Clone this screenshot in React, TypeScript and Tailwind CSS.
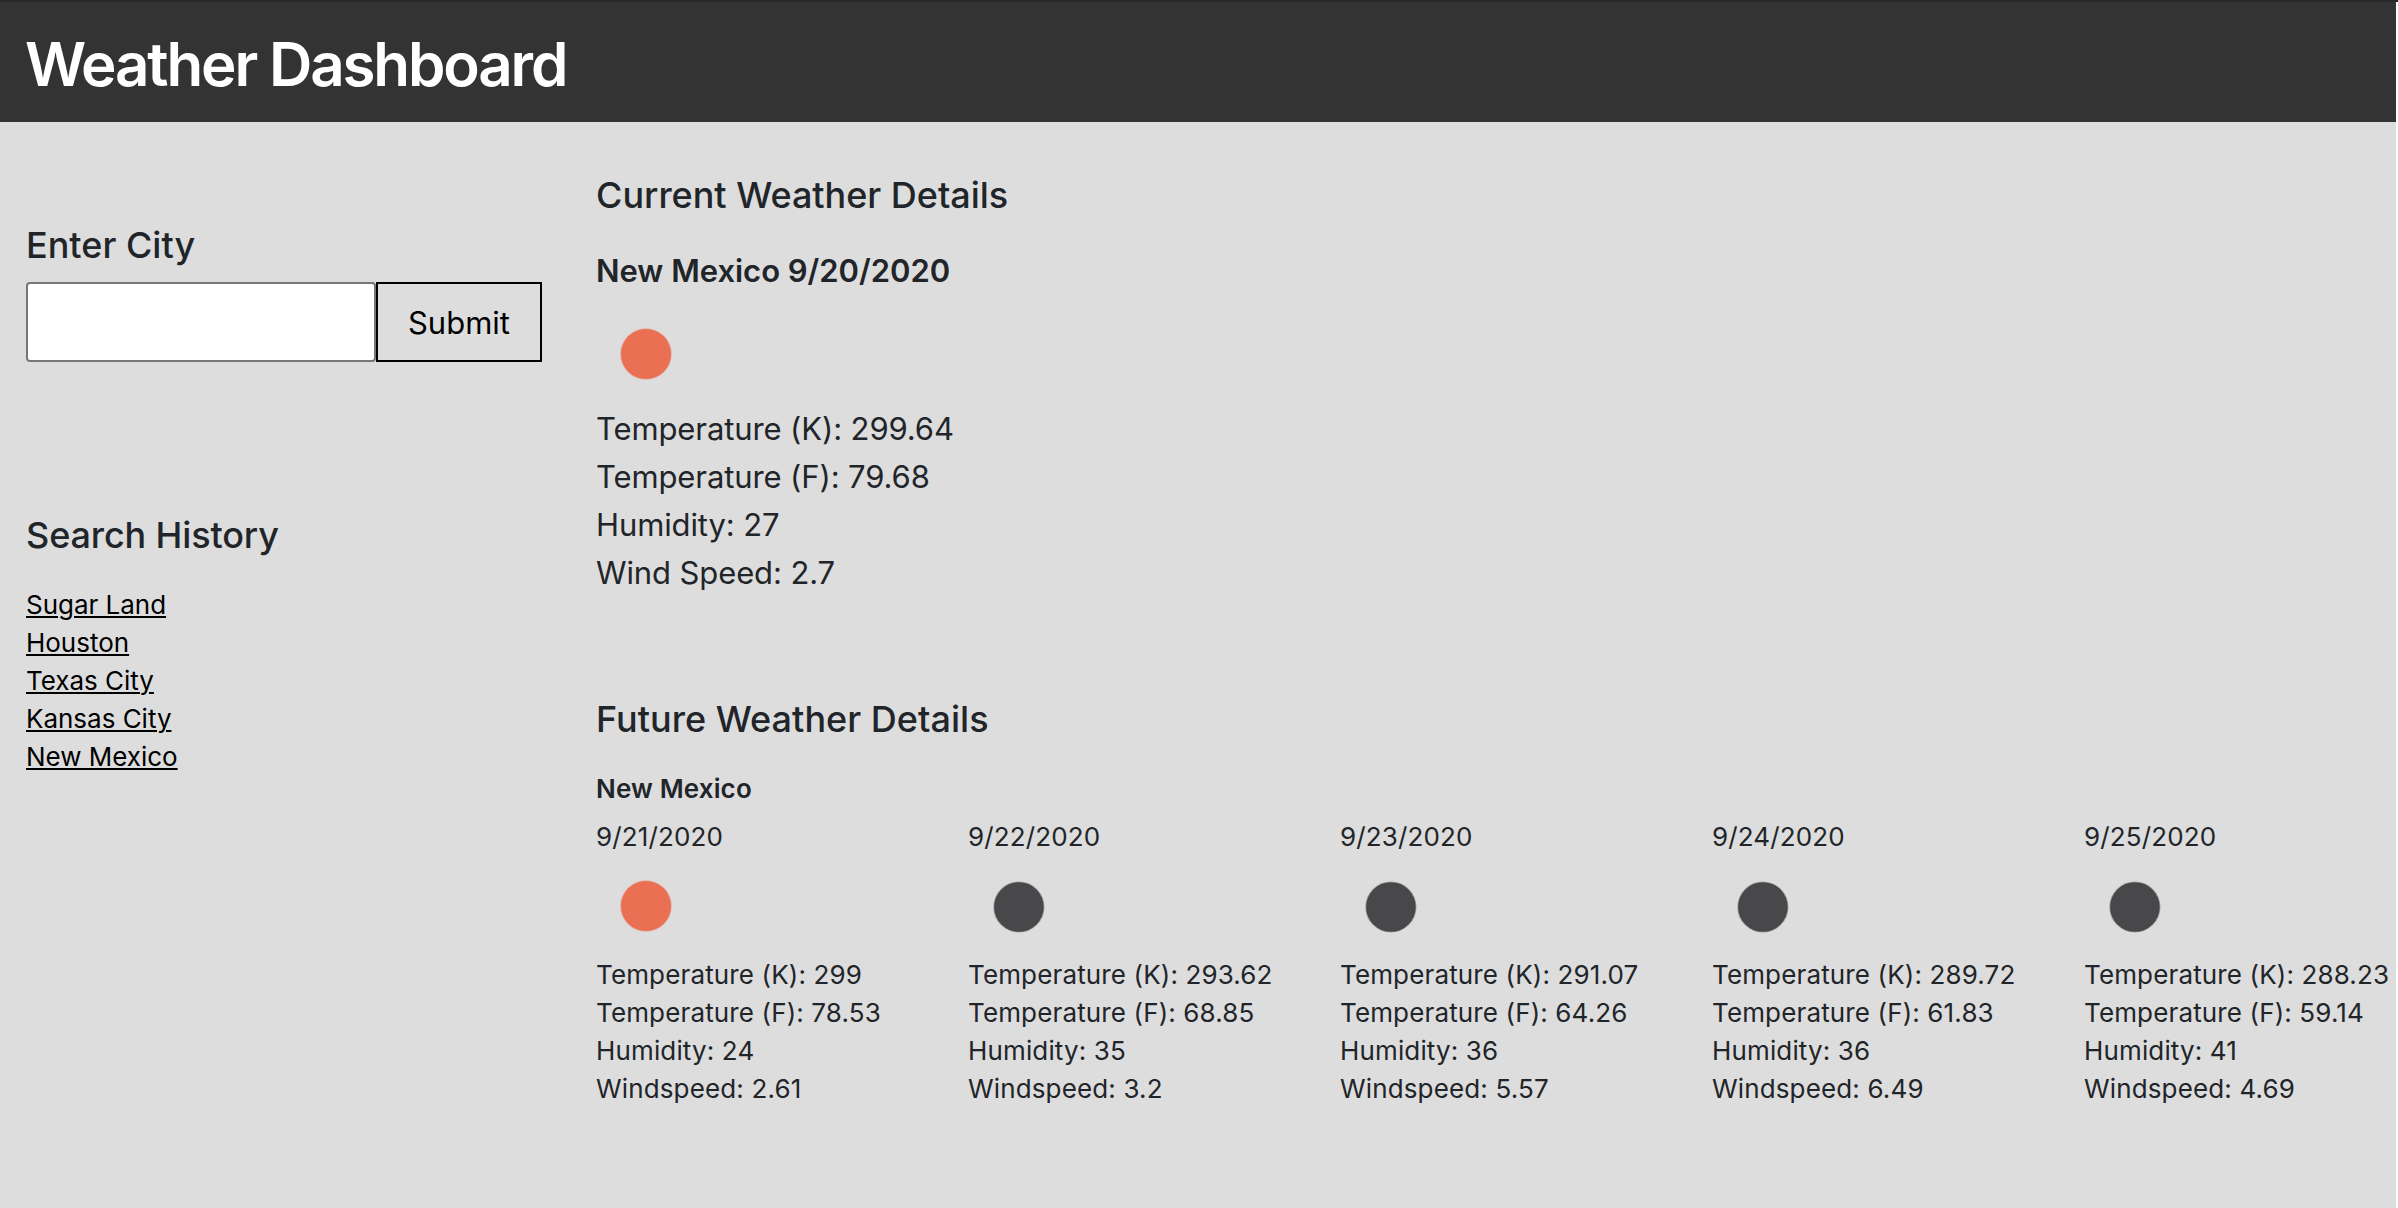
type Forecast = {
  date: string;
  tone: "clear" | "cloudy";
  kelvin: string;
  fahrenheit: string;
  humidity: string;
  wind: string;
};

const history = ["Sugar Land", "Houston", "Texas City", "Kansas City", "New Mexico"];

const forecasts: Forecast[] = [
  { date: "9/21/2020", tone: "clear", kelvin: "299", fahrenheit: "78.53", humidity: "24", wind: "2.61" },
  { date: "9/22/2020", tone: "cloudy", kelvin: "293.62", fahrenheit: "68.85", humidity: "35", wind: "3.2" },
  { date: "9/23/2020", tone: "cloudy", kelvin: "291.07", fahrenheit: "64.26", humidity: "36", wind: "5.57" },
  { date: "9/24/2020", tone: "cloudy", kelvin: "289.72", fahrenheit: "61.83", humidity: "36", wind: "6.49" },
  { date: "9/25/2020", tone: "cloudy", kelvin: "288.23", fahrenheit: "59.14", humidity: "41", wind: "4.69" },
];

function WeatherIcon({ tone }: { tone: "clear" | "cloudy" }) {
  return (
    <svg viewBox="0 0 100 100" className="block size-[100px]" aria-hidden="true">
      {tone === "clear" ? (
        <circle cx="50" cy="50" r="25" fill="#eb6f52" stroke="#eb6f52" strokeOpacity="0.4" strokeWidth="1.6" />
      ) : (
        <circle cx="50.9" cy="51" r="24.8" fill="#48484a" stroke="#48484a" strokeOpacity="0.4" strokeWidth="1.6" />
      )}
    </svg>
  );
}

function ForecastColumn({ day }: { day: Forecast }) {
  return (
    <div className="w-[372px] shrink-0 whitespace-nowrap">
      <p>{day.date}</p>
      <WeatherIcon tone={day.tone} />
      <p>Temperature (K): {day.kelvin}</p>
      <p>Temperature (F): {day.fahrenheit}</p>
      <p>Humidity: {day.humidity}</p>
      <p>Windspeed: {day.wind}</p>
    </div>
  );
}

export default function App() {
  return (
    <div className="h-[1208px] w-full overflow-hidden bg-white font-['Inter',sans-serif] text-[#212529]">
      <div className="h-[2px] bg-[#282828]" />
      <div className="flex h-[1206px] w-[2396px] flex-col bg-[#dddddd]">
        <header className="h-[120px] shrink-0 bg-[#333333] pt-[26px] pl-[25px]">
          <h1 className="text-[60px] leading-[72px] font-[570] tracking-[-2.14px] text-white">Weather Dashboard</h1>
        </header>

        <div className="flex">
          <aside className="w-[596px] shrink-0 pt-[101px] pl-[26px]">
            <h2 className="text-[36px] leading-[44px] font-medium">Enter City</h2>
            <form className="mt-[15px] flex" onSubmit={(e) => e.preventDefault()}>
              <input
                type="text"
                aria-label="City"
                className="h-20 w-[350px] rounded-[4px] border-2 border-[#767676] bg-white px-3 text-[31px] outline-none"
              />
              <button className="h-20 w-[166px] border-2 border-black pt-[2px] text-[31px] text-black">Submit</button>
            </form>

            <h2 className="mt-[151px] text-[36px] leading-[44px] font-medium tracking-[-0.13px]">Search History</h2>
            <ul className="mt-[29px] text-[26px] leading-[38px] tracking-[-0.02px] text-black">
              {history.map((city) => (
                <li key={city}>
                  <a href="#" className="underline decoration-2 underline-offset-2">
                    {city}
                  </a>
                </li>
              ))}
            </ul>
          </aside>

          <main className="min-w-0 flex-1 pt-[51px]">
            <section className="text-[31px] leading-[48px] tracking-[-0.11px]">
              <h2 className="text-[36px] leading-[44px] font-medium tracking-[-0.02px]">Current Weather Details</h2>
              <p className="mt-[30px] mb-[9px] font-semibold tracking-[-0.02px]">New Mexico 9/20/2020</p>
              <WeatherIcon tone="clear" />
              <div className="mt-px">
                <p>Temperature (K): 299.64</p>
                <p>Temperature (F): 79.68</p>
                <p>Humidity: 27</p>
                <p>Wind Speed: 2.7</p>
              </div>
            </section>

            <section className="mt-[100px] text-[26px] leading-[38px] tracking-[0.14px]">
              <h2 className="text-[36px] leading-[44px] font-medium tracking-[0.03px]">Future Weather Details</h2>
              <p className="mt-[29px] mb-[10px] font-semibold">New Mexico</p>
              <div className="flex">
                {forecasts.map((day) => (
                  <ForecastColumn key={day.date} day={day} />
                ))}
              </div>
            </section>
          </main>
        </div>
      </div>
    </div>
  );
}
